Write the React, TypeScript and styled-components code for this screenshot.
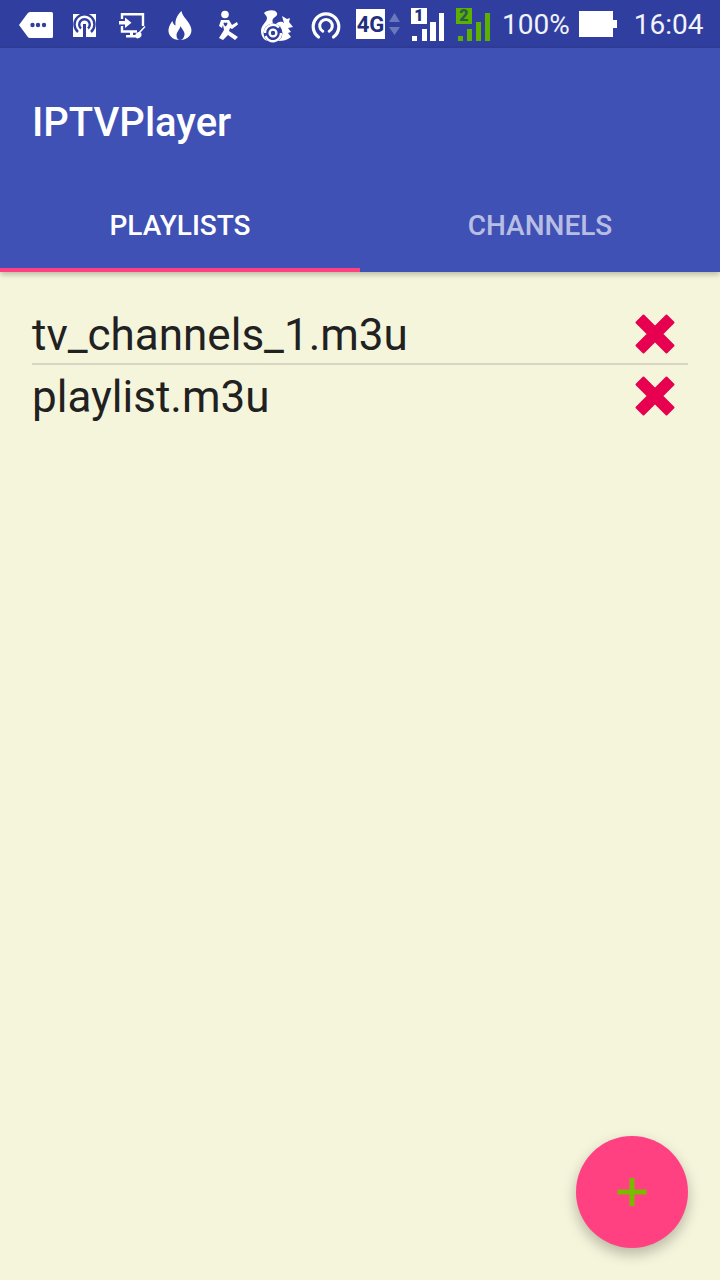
import styled, { createGlobalStyle } from "styled-components";

const GlobalStyle = createGlobalStyle`
  html, body {
    margin: 0;
    padding: 0;
    background: #f5f5dc;
  }
`;

const Screen = styled.div`
  display: flex;
  flex-direction: column;
  width: 720px;
  height: 1280px;
  overflow: hidden;
  font-family: Roboto, "Liberation Sans", sans-serif;
`;

const StatusBar = styled.div`
  display: flex;
  align-items: center;
  height: 48px;
  padding-left: 12px;
  box-sizing: border-box;
  background-color: #303f9f;
  color: #f1f2fa;
`;
const Slot = styled.svg`
  display: block;
  flex: none;
  width: 48px;
  height: 48px;
`;
const NetBadge = styled.div`
  display: flex;
  align-items: center;
  justify-content: center;
  flex: none;
  width: 29px;
  height: 30px;
  margin-left: 8px;
  background-color: #fff;
  color: #232f7c;
  font-size: 22px;
  font-weight: 700;
`;
const Arrows = styled.svg`
  display: block;
  flex: none;
  width: 11px;
  height: 48px;
  margin-left: 4px;
`;
const Signal = styled.div<{ $gap: number }>`
  position: relative;
  flex: none;
  width: 36px;
  height: 48px;
  margin-left: ${(props) => props.$gap}px;
`;
const SignalBars = styled.svg`
  display: block;
  width: 36px;
  height: 48px;
`;
const SimBadge = styled.span<{ $bg: string; $fg: string }>`
  position: absolute;
  left: 0;
  top: 8px;
  width: 16px;
  height: 16px;
  background-color: ${(props) => props.$bg};
  color: ${(props) => props.$fg};
  font-size: 16px;
  font-weight: 900;
  line-height: 16px;
  text-align: center;
`;
const StatusText = styled.span<{ $gap: number }>`
  flex: none;
  margin-left: ${(props) => props.$gap}px;
  font-size: 28px;
  line-height: 48px;
  padding-top: 2px;
`;
const Battery = styled.div`
  flex: none;
  width: 34px;
  height: 26px;
  margin-left: 9px;
  background-color: #fff;
  position: relative;
  &::after {
    content: "";
    position: absolute;
    left: 34px;
    top: 9px;
    width: 4px;
    height: 8px;
    background-color: #fff;
  }
`;

const AppBar = styled.header`
  position: relative;
  z-index: 1;
  flex: none;
  background-color: #3f51b5;
  box-shadow: 0 2px 6px rgba(0, 0, 0, 0.28);
`;
const Toolbar = styled.div`
  display: flex;
  align-items: center;
  height: 128px;
  padding: 20px 32px 0;
  box-sizing: border-box;
`;
const Title = styled.h1`
  margin: 0;
  color: #fff;
  font-size: 40px;
  font-weight: 500;
`;
const Tabs = styled.div`
  display: flex;
  height: 96px;
`;
const Tab = styled.div<{ $active?: boolean }>`
  flex: 1;
  display: flex;
  align-items: center;
  justify-content: center;
  box-sizing: border-box;
  padding-top: 6px;
  border-bottom: 4px solid ${(props) => (props.$active ? "#ff4081" : "transparent")};
  color: ${(props) => (props.$active ? "#fff" : "rgba(255, 255, 255, 0.65)")};
  font-size: 28px;
  font-weight: 500;
`;

const Main = styled.main`
  position: relative;
  flex: 1;
  padding: 31px 32px 0;
  background-color: #f5f5dc;
`;
const Row = styled.div<{ $divider?: boolean }>`
  display: flex;
  align-items: center;
  justify-content: space-between;
  height: 60px;
  border-bottom: 2px solid ${(props) => (props.$divider ? "#d6d6c2" : "transparent")};
`;
const FileName = styled.span`
  padding-top: 4px;
  color: #212121;
  font-size: 44px;
`;
const DeleteIcon = styled.svg`
  display: block;
  width: 44px;
  height: 44px;
  margin: 2px 11px 0 0;
`;
const Fab = styled.button`
  position: absolute;
  right: 32px;
  bottom: 32px;
  display: flex;
  align-items: center;
  justify-content: center;
  width: 112px;
  height: 112px;
  padding: 0;
  border: 0;
  border-radius: 50%;
  background-color: #ff4081;
  box-shadow: 0 6px 14px rgba(0, 0, 0, 0.26);
`;
const PlusIcon = styled.svg`
  display: block;
  width: 30px;
  height: 30px;
`;

const StatusBg = "#303f9f";

function XIcon() {
  return (
    <DeleteIcon viewBox="0 0 44 44">
      <path
        d="M10.5 3.5 22 15l11.5-11.5 7 7L29 22l11.5 11.5-7 7L22 29 10.5 40.5l-7-7L15 22 3.5 10.5z"
        fill="#e6004f"
        stroke="#e6004f"
        strokeWidth="2"
        strokeLinejoin="round"
      />
    </DeleteIcon>
  );
}

export default function App() {
  const playlists = ["tv_channels_1.m3u", "playlist.m3u"];

  return (
    <Screen>
      <GlobalStyle />
      <StatusBar>
        {/* message tag */}
        <Slot viewBox="0 0 48 48">
          <path
            d="M7 25 15.5 13.5Q16.5 12 18 12H39.5Q41 12 41 13.5V36.5Q41 38 39.5 38H18Q16.5 38 15.5 36.5Z"
            fill="#fff"
          />
          <circle cx="20.5" cy="25" r="2.2" fill={StatusBg} />
          <circle cx="26" cy="25" r="2.2" fill={StatusBg} />
          <circle cx="32" cy="25" r="2.2" fill={StatusBg} />
        </Slot>
        {/* broadcast square */}
        <Slot viewBox="0 0 48 48">
          <rect x="13" y="14" width="23" height="23" fill="#fff" />
          <g fill="none" stroke={StatusBg} strokeWidth="2.4">
            <path d="M18 32A10 10 0 1 1 31 32" />
            <path d="M21 28.5A5.3 5.3 0 1 1 28 28.5" />
          </g>
          <rect x="23" y="24" width="3" height="13" fill={StatusBg} />
        </Slot>
        {/* screen with brush */}
        <Slot viewBox="0 0 48 48">
          <path d="M14 19V14.2H35V26" fill="none" stroke="#fff" strokeWidth="2.4" />
          <path d="M14 26V31.5H29" fill="none" stroke="#fff" strokeWidth="2.4" />
          <path d="M11 21H17V17.5L23.5 22.8 17 28V24.5H11Z" fill="#fff" />
          <rect x="22" y="32" width="3" height="3" fill="#fff" />
          <rect x="18" y="35" width="11" height="2.5" fill="#fff" />
          <path d="M31 33 37 26.5" stroke="#fff" strokeWidth="1.5" />
          <path d="M27.5 34Q31 30.5 33.5 33.5 34 38 29 38.5Q27 37 27.5 34Z" fill="#fff" />
        </Slot>
        {/* flame */}
        <Slot viewBox="0 0 48 48">
          <path
            d="M25.5 11C26.5 17 33 21 35 27.5 37 34 32 40 24 40 16 40 12 35 12.5 29.5 13 25.5 15 23 16.5 21 17 23.5 18 25 19.5 25.5 19 20 21 15 25.5 11Z"
            fill="#fff"
          />
          <path d="M24.5 26C25.5 29 29 31 28.5 35 28 38 26 40 24 40 22 40 20.5 38 20.5 35.5 20.5 32 23.5 30 24.5 26Z" fill={StatusBg} />
        </Slot>
        {/* walker */}
        <Slot viewBox="0 0 48 48">
          <circle cx="21" cy="14.5" r="3.8" fill="#fff" />
          <path
            d="M17 20H25L28 25 33 22 34 24.5 28 29 26 28 25 31 34 37 31 40 24 35 19 40 15 38 20 30 19 25 18 28 15 26Z"
            fill="#fff"
          />
          <path d="M19.5 23Q20.5 22 21.5 23 22.5 22 23.5 23 23.5 25 21.5 26.5 19.5 25 19.5 23Z" fill={StatusBg} />
        </Slot>
        {/* squirrel */}
        <Slot viewBox="0 0 48 48">
          <path
            d="M12 13C15 10 23 9 25 13 26 16 22 17 21 19 19 22 23 24 20 26 16 27 13 32 14 37L17 41C12 41 9 36 9 31 9 25 15 22 15 18 15 16 13 15 12 13Z"
            fill="#fff"
          />
          <path
            d="M23 25C26 21 30 21 32 23L30 16 35 19 38 18 37 22 41 27 36 28 39 32 36 33 39 37C35 40 31 41 27 41H20Z"
            fill="#fff"
          />
          <circle cx="21" cy="33" r="9.5" fill={StatusBg} />
          <g fill="none" stroke="#fff" strokeWidth="2.4">
            <path d="M13 33A8 8 0 0 1 27 27.5" />
            <path d="M13.5 36A8 8 0 0 0 29 33" />
            <circle cx="21" cy="33" r="3.4" />
          </g>
        </Slot>
        {/* hotspot */}
        <Slot viewBox="0 0 48 48">
          <g fill="none" stroke="#fff" strokeLinecap="round">
            <path d="M18.5 37A12.8 12.8 0 1 1 33.5 37" strokeWidth="3.2" />
            <path d="M22.8 31.3A6.3 6.3 0 1 1 29.2 31.3" strokeWidth="3" />
          </g>
        </Slot>
        <NetBadge>4G</NetBadge>
        <Arrows viewBox="0 0 11 48">
          <path d="M5.5 13 11 22H0Z" fill="#6a78bd" />
          <path d="M0 27H11L5.5 35Z" fill="#6a78bd" />
        </Arrows>
        <Signal $gap={11}>
          <SignalBars viewBox="0 0 36 48">
            <g fill="#fff">
              <rect x="1" y="36" width="5" height="5" />
              <rect x="11" y="29" width="5" height="12" />
              <rect x="19" y="22" width="6" height="19" />
              <rect x="28" y="13" width="5" height="28" />
            </g>
          </SignalBars>
          <SimBadge $bg="#fff" $fg="#232f7c">1</SimBadge>
        </Signal>
        <Signal $gap={9}>
          <SignalBars viewBox="0 0 36 48">
            <g fill="#5cb000">
              <rect x="2" y="36" width="5" height="5" />
              <rect x="11" y="29" width="5" height="12" />
              <rect x="20" y="22" width="5" height="19" />
              <rect x="29" y="13" width="5" height="28" />
            </g>
          </SignalBars>
          <SimBadge $bg="#5cb000" $fg="#2b5a52">2</SimBadge>
        </Signal>
        <StatusText $gap={10}>100%</StatusText>
        <Battery />
        <StatusText $gap={21}>16:04</StatusText>
      </StatusBar>

      <AppBar>
        <Toolbar>
          <Title>IPTVPlayer</Title>
        </Toolbar>
        <Tabs>
          <Tab $active>PLAYLISTS</Tab>
          <Tab>CHANNELS</Tab>
        </Tabs>
      </AppBar>

      <Main>
        {playlists.map((name, idx) => (
          <Row key={name} $divider={idx === 0}>
            <FileName>{name}</FileName>
            <XIcon />
          </Row>
        ))}
        <Fab>
          <PlusIcon viewBox="0 0 30 30">
            <path d="M12.5 1H17.5V12.5H29.5V17.5H17.5V29H12.5V17.5H0.5V12.5H12.5Z" fill="#7cb800" />
          </PlusIcon>
        </Fab>
      </Main>
    </Screen>
  );
}
